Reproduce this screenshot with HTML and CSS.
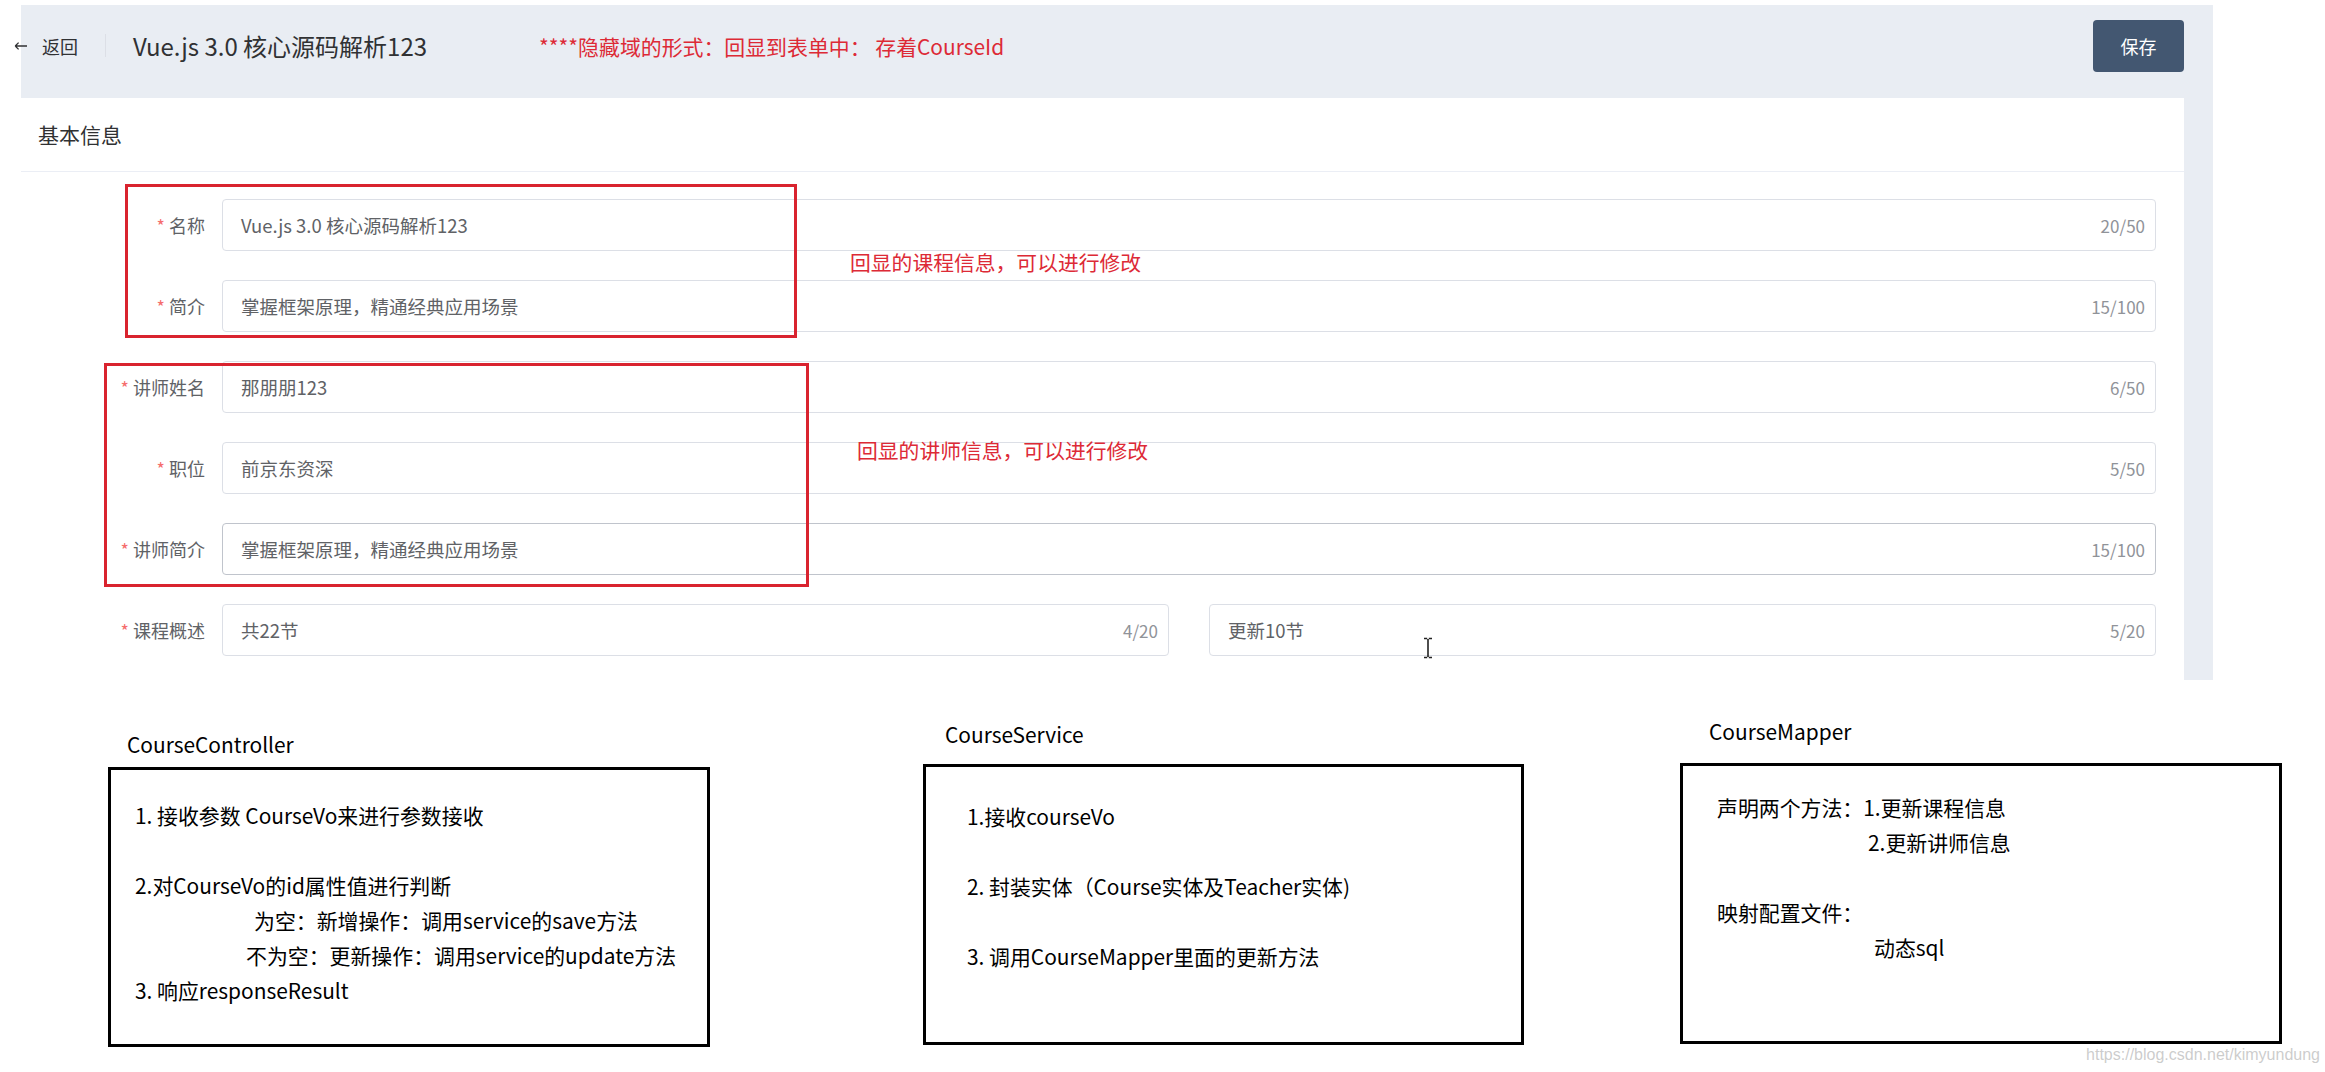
FILE: index.html
```html
<!DOCTYPE html>
<html lang="zh-CN">
<head>
  <meta charset="UTF-8">
  <meta name="viewport" content="width=device-width, initial-scale=1.0">
  <title>编辑课程</title>

  <link rel="stylesheet" href="styles.css">
</head>
<body>
  <div class="panel">
    <div class="header">
      <div class="back">
        <svg class="back-icon" width="13" height="12" viewBox="0 0 13 12">
          <path d="M1.5 6H13 M1.2 6L4.6 2.6 M1.2 6L4.6 9.4" stroke="#303133" stroke-width="1.3" fill="none"/>
        </svg>
        <span>返回</span>
      </div>
      <div class="divider"></div>
      <div class="title">Vue.js 3.0 核心源码解析123</div>
      <div class="note">****隐藏域的形式：回显到表单中： 存着CourseId</div>
      <button class="save">保存</button>
    </div>

    <div class="card">
      <div class="card-header">基本信息</div>

      <div class="form">
        <div class="row">
          <label class="label">名称</label>
          <div class="input"><span>Vue.js 3.0 核心源码解析123</span><span class="count">20/50</span></div>
        </div>
        <div class="row">
          <label class="label">简介</label>
          <div class="input"><span>掌握框架原理，精通经典应用场景</span><span class="count">15/100</span></div>
        </div>
        <div class="row">
          <label class="label">讲师姓名</label>
          <div class="input"><span>那朋朋123</span><span class="count">6/50</span></div>
        </div>
        <div class="row">
          <label class="label">职位</label>
          <div class="input"><span>前京东资深</span><span class="count">5/50</span></div>
        </div>
        <div class="row">
          <label class="label">讲师简介</label>
          <div class="input input-hover"><span>掌握框架原理，精通经典应用场景</span><span class="count">15/100</span></div>
        </div>
        <div class="row">
          <label class="label">课程概述</label>
          <div class="pair">
            <div class="input"><span>共22节</span><span class="count">4/20</span></div>
            <div class="input"><span>更新10节</span><span class="count">5/20</span></div>
          </div>
        </div>
      </div>

      <div class="mark mark-course"></div>
      <div class="mark mark-teacher"></div>
      <div class="mark-text mark-text-course">回显的课程信息，可以进行修改</div>
      <div class="mark-text mark-text-teacher">回显的讲师信息，可以进行修改</div>

      <svg class="cursor" width="10" height="22" viewBox="0 0 10 22">
        <path d="M1 1.5h3.2 M5.8 1.5H9 M5 2v18 M1 20.5h3.2 M5.8 20.5H9" stroke="#222" stroke-width="1.6" fill="none"/>
      </svg>
    </div>
  </div>

  <div class="diagram">
    <div class="group group-controller">
      <div class="group-title">CourseController</div>
      <div class="box">
        <p>1. 接收参数 CourseVo来进行参数接收</p>
        <p>&nbsp;</p>
        <p>2.对CourseVo的id属性值进行判断</p>
        <p class="indent-a">为空：新增操作：调用service的save方法</p>
        <p class="indent-b">不为空：更新操作：调用service的update方法</p>
        <p>3. 响应responseResult</p>
      </div>
    </div>

    <div class="group group-service">
      <div class="group-title">CourseService</div>
      <div class="box">
        <p>1.接收courseVo</p>
        <p>&nbsp;</p>
        <p>2. 封装实体（Course实体及Teacher实体)</p>
        <p>&nbsp;</p>
        <p>3. 调用CourseMapper里面的更新方法</p>
      </div>
    </div>

    <div class="group group-mapper">
      <div class="group-title">CourseMapper</div>
      <div class="box">
        <p>声明两个方法：1.更新课程信息</p>
        <p class="indent-c">2.更新讲师信息</p>
        <p>&nbsp;</p>
        <p>映射配置文件：</p>
        <p class="indent-d">动态sql</p>
      </div>
    </div>
  </div>

  <div class="watermark">https://blog.csdn.net/kimyundung</div>
</body>
</html>
```

FILE: styles.css
```css
body {
  margin: 0;
  width: 2325px;
  height: 1072px;
  overflow: hidden;
  background: #ffffff;
  font-family: "Noto Sans CJK SC", sans-serif;
  color: #303133;
  position: relative;
}

.panel {
  margin: 5px 0 0 21px;
  width: 2192px;
  background: #e9edf3;
}

.header {
  height: 93px;
  padding: 0 29px 12px 0;
  box-sizing: border-box;
  display: flex;
  align-items: center;
}

.back {
  display: flex;
  align-items: center;
  gap: 15px;
  margin-left: -7px;
  font-size: 18px;
}

.divider {
  width: 1px;
  height: 23px;
  background: #dcdfe6;
  margin: 0 27px 0 27px;
}

.title {
  font-size: 24px;
  color: #303133;
}

.note {
  margin-left: 112px;
  font-size: 20.9px;
  color: #dd2a36;
}

.save {
  margin-left: auto;
  width: 91px;
  height: 52px;
  border: 0;
  border-radius: 4px;
  background: #435771;
  color: #ffffff;
  font-family: inherit;
  font-size: 18px;
  cursor: pointer;
}

.card {
  position: relative;
  margin-right: 29px;
  background: #ffffff;
  padding-bottom: 24px;
}

.card-header {
  height: 73px;
  line-height: 73px;
  padding-left: 17px;
  border-bottom: 1px solid #ebeef5;
  font-size: 21px;
}

.form {
  padding: 27px 28px 0 0;
  display: flex;
  flex-direction: column;
  gap: 29px;
}

.row {
  display: flex;
  align-items: center;
}

.label {
  width: 184px;
  flex: none;
  margin-right: 17px;
  text-align: right;
  font-size: 18px;
  color: #606266;
}

.label::before {
  content: "*";
  color: #f56c6c;
  margin-right: 4px;
}

.input {
  flex: 1;
  height: 52px;
  box-sizing: border-box;
  border: 1px solid #dcdfe6;
  border-radius: 4px;
  padding: 0 10px 0 18px;
  display: flex;
  align-items: center;
  justify-content: space-between;
  font-size: 18.5px;
  color: #606266;
}

.input-hover {
  border-color: #c0c4cc;
}

.count {
  font-size: 17px;
  color: #909399;
}

.pair {
  flex: 1;
  display: grid;
  grid-template-columns: 1fr 1fr;
  gap: 40px;
}

.mark {
  position: absolute;
  border: 3px solid #d9232f;
  box-sizing: border-box;
}

.mark-course {
  left: 104px;
  top: 86px;
  width: 672px;
  height: 154px;
}

.mark-teacher {
  left: 83px;
  top: 265px;
  width: 705px;
  height: 224px;
}

.mark-text {
  position: absolute;
  font-size: 20.8px;
  line-height: 28px;
  color: #dd2a36;
}

.mark-text-course {
  left: 829px;
  top: 150px;
}

.mark-text-teacher {
  left: 836px;
  top: 338px;
}

.cursor {
  position: absolute;
  left: 1402px;
  top: 539px;
}

.diagram {
  display: flex;
  align-items: flex-start;
  padding-top: 37px;
  font-size: 20.9px;
  color: #000000;
}

.group-title {
  line-height: 28px;
}

.box {
  height: 281px;
  box-sizing: border-box;
  border: 3px solid #000000;
}

.box p {
  margin: 0;
  line-height: 35px;
  white-space: nowrap;
}

.group-controller {
  margin: 13px 0 0 108px;
  width: 602px;
}

.group-controller .group-title {
  padding-left: 19px;
  margin-bottom: 9px;
}

.group-controller .box {
  height: 280px;
  padding: 28px 0 0 24px;
}

.group-service {
  margin: 3px 0 0 213px;
  width: 601px;
}

.group-service .group-title {
  padding-left: 22px;
  margin-bottom: 16px;
}

.group-service .box {
  padding: 32px 0 0 41px;
}

.group-mapper {
  margin-left: 156px;
  width: 602px;
}

.group-mapper .group-title {
  padding-left: 29px;
  margin-bottom: 18px;
}

.group-mapper .box {
  padding: 24px 0 0 34px;
}

.indent-a {
  padding-left: 119px;
}

.indent-b {
  padding-left: 111px;
}

.indent-c {
  padding-left: 151px;
}

.indent-d {
  padding-left: 157px;
}

.watermark {
  position: absolute;
  right: 5px;
  bottom: 8px;
  font-family: "Liberation Sans", sans-serif;
  font-size: 16px;
  color: rgba(170, 170, 170, 0.6);
}
```
